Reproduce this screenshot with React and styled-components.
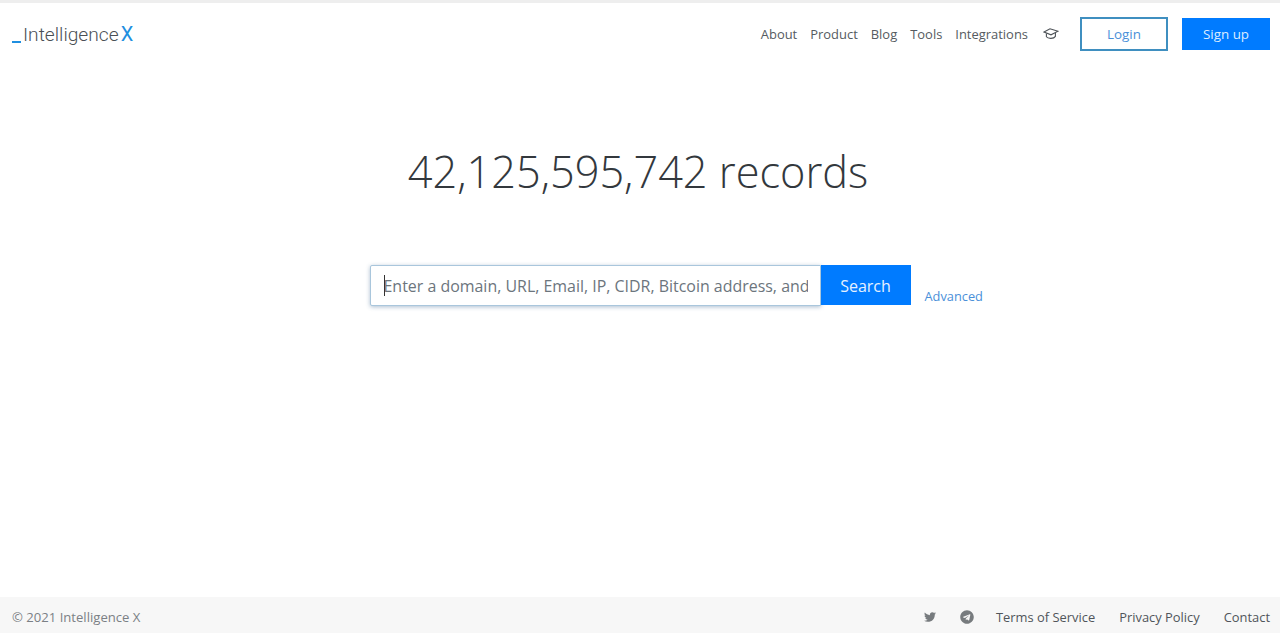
import React from "react";
import styled, { createGlobalStyle } from "styled-components";
import { FaTwitter, FaTelegram } from "react-icons/fa";

const GlobalStyle = createGlobalStyle`
	html, body {
		margin: 0;
		padding: 0;
		background: #fff;
		font-family: "Open Sans", "Noto Sans", sans-serif;
	}
	* {
		box-sizing: border-box;
	}
`;

const Page = styled.div`
	height: 633px;
	display: flex;
	flex-direction: column;
	border-top: 3px solid #eeeeee;
	overflow: hidden;
`;

const Header = styled.header`
	height: 62px;
	padding: 0 10px 0 12px;
	display: flex;
	align-items: center;
	justify-content: space-between;
`;

const Logo = styled.a`
	display: flex;
	align-items: baseline;
	font-family: "Roboto", sans-serif;
	font-size: 19.2px;
	font-weight: 300;
	color: #4a4f55;
`;

const LogoUnderscore = styled.span`
	width: 9px;
	height: 2px;
	margin-right: 2px;
	background: #1f8fe0;
	align-self: flex-end;
	margin-bottom: 3px;
`;

const LogoX = styled.span`
	color: #1f8fe0;
	font-size: 20px;
	font-weight: 400;
	margin-left: 2px;
`;

const Nav = styled.nav`
	display: flex;
	align-items: center;
`;

const NavLink = styled.a`
	font-size: 12.95px;
	color: #555b61;
	margin-right: 13px;
`;

const CapIcon = styled.svg`
	width: 16px;
	height: 14px;
	margin: 0 21px 0 2px;
	color: #4d5257;
`;

const NavButton = styled.a`
	width: 88px;
	height: ${(props) => (props.$primary ? "32px" : "34px")};
	display: flex;
	align-items: center;
	justify-content: center;
	font-size: 13.4px;
	color: ${(props) => (props.$primary ? "#dcecff" : "#4a90d9")};
	background: ${(props) => (props.$primary ? "#007bff" : "#fff")};
	border: 2px solid ${(props) => (props.$primary ? "#007bff" : "#3f8fc0")};
	margin-left: ${(props) => (props.$primary ? "14px" : "0")};
`;

const Main = styled.main`
	flex: 1;
	display: flex;
	flex-direction: column;
	align-items: center;
`;

const Title = styled.h1`
	margin: 77px 0 0;
	height: 60px;
	line-height: 60px;
	font-size: 43.3px;
	font-weight: 300;
	color: #33383d;
	transform: translateX(-2px);
`;

const SearchRow = styled.div`
	width: 100%;
	margin-top: 63px;
	display: grid;
	grid-template-columns: 1fr auto 1fr;
`;

const SearchBox = styled.form`
	grid-column: 2;
	display: flex;
	align-items: flex-start;
	position: relative;
`;

const SearchInput = styled.input`
	width: 451px;
	height: 41px;
	padding: 0 12px 0 13px;
	font-family: inherit;
	font-size: 15.95px;
	border: 1px solid #a9c6dc;
	border-radius: 2px 0 0 2px;
	box-shadow: 0 1px 4px rgba(70, 110, 150, 0.45);
	outline: none;
	&::placeholder {
		color: #6c757d;
		opacity: 1;
	}
`;

const Caret = styled.span`
	position: absolute;
	left: 14px;
	top: 10px;
	width: 1px;
	height: 21px;
	background: #333;
`;

const SearchButton = styled.button`
	width: 90px;
	height: 40px;
	padding: 2px 0 0;
	border: none;
	background: #007bff;
	color: #e6f1ff;
	font-family: inherit;
	font-size: 16px;
`;

const AdvancedLink = styled.a`
	align-self: center;
	margin: 21px 0 0 14px;
	font-size: 12.8px;
	color: #4a90d9;
`;

const Footer = styled.footer`
	height: 36px;
	padding: 4px 10px 0 12px;
	background: #f7f7f7;
	display: flex;
	align-items: center;
	justify-content: space-between;
`;

const Copyright = styled.span`
	font-size: 13.1px;
	color: #7b8085;
`;

const FooterNav = styled.div`
	display: flex;
	align-items: center;
`;

const SocialIcon = styled.span`
	display: flex;
	font-size: ${(props) => props.$size}px;
	color: #777b7e;
	margin-right: ${(props) => props.$gap}px;
`;

const FooterLink = styled.a`
	font-size: 12.9px;
	color: #50555a;
	margin-left: ${(props) => props.$gap || 0}px;
`;

const App = () => (
	<Page>
		<GlobalStyle />
		<Header>
			<Logo>
				<LogoUnderscore />
				Intelligence
				<LogoX>X</LogoX>
			</Logo>
			<Nav>
				<NavLink>About</NavLink>
				<NavLink>Product</NavLink>
				<NavLink>Blog</NavLink>
				<NavLink>Tools</NavLink>
				<NavLink>Integrations</NavLink>
				<CapIcon viewBox="0 0 16 14" fill="none" stroke="currentColor" strokeWidth="1.1">
					<path d="M1 5 7 1.8l8 2.4-7 3.6z" />
					<path d="M3.4 6.4v3.4c1.6 2.2 7.4 2.2 9 -.4V6" />
				</CapIcon>
				<NavButton>Login</NavButton>
				<NavButton $primary>Sign up</NavButton>
			</Nav>
		</Header>
		<Main>
			<Title>42,125,595,742 records</Title>
			<SearchRow>
				<SearchBox>
					<SearchInput placeholder="Enter a domain, URL, Email, IP, CIDR, Bitcoin address, and more" />
					<Caret />
					<SearchButton type="button">Search</SearchButton>
				</SearchBox>
				<AdvancedLink>Advanced</AdvancedLink>
			</SearchRow>
		</Main>
		<Footer>
			<Copyright>© 2021 Intelligence X</Copyright>
			<FooterNav>
				<SocialIcon $size={12} $gap={24}>
					<FaTwitter />
				</SocialIcon>
				<SocialIcon $size={14} $gap={22}>
					<FaTelegram />
				</SocialIcon>
				<FooterLink>Terms of Service</FooterLink>
				<FooterLink $gap={24}>Privacy Policy</FooterLink>
				<FooterLink $gap={24}>Contact</FooterLink>
			</FooterNav>
		</Footer>
	</Page>
);

export default App;
